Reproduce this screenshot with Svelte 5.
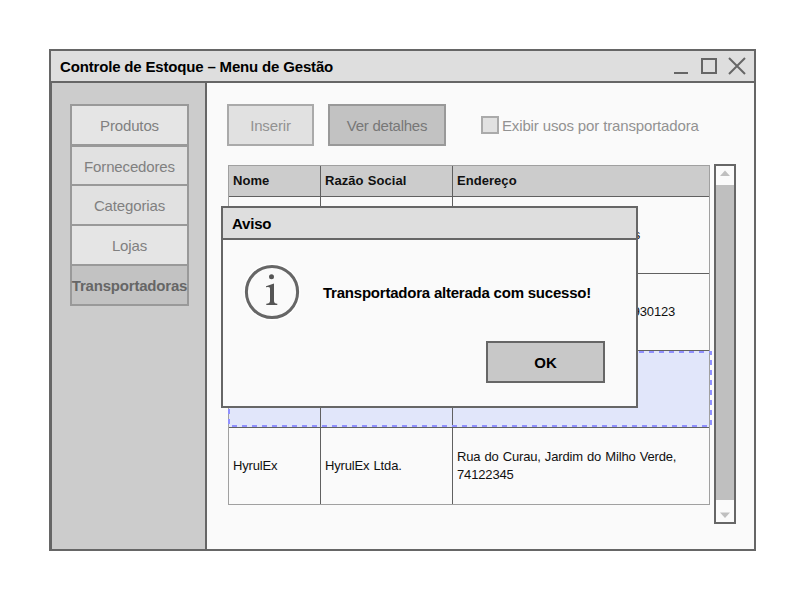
<script>
  const menu = ['Produtos', 'Fornecedores', 'Categorias', 'Lojas', 'Transportadoras'];
  const rows = [
    { name: '', company: '', lines: ['Avenida das Palmeras, Campos'] },
    { name: '', company: '', lines: ['Rua da Laranjeiras, Centro, 74930123'] },
    { name: '', company: '', lines: [], selected: true },
    { name: 'HyrulEx', company: 'HyrulEx Ltda.', lines: ['Rua do Curau, Jardim do Milho Verde,', '74122345'] }
  ];
</script>

<div class="stage">
  <div class="window">
    <header class="titlebar">
      <span class="title">Controle de Estoque – Menu de Gestão</span>
      <svg class="controls" width="74" height="20" viewBox="0 0 74 20" fill="none" stroke="#666" stroke-width="2">
        <path d="M1 17H15" />
        <rect x="29" y="3" width="14" height="14" />
        <path d="M56 2L72 18M72 2L56 18" />
      </svg>
    </header>
    <div class="body">
      <nav>
        {#each menu as item, i}
          <button class:active={i === 4} class="item"><span>{item}</span></button>
        {/each}
      </nav>
      <main>
        <div class="toolbar">
          <button class="insert">Inserir</button>
          <button class="details">Ver detalhes</button>
          <label><i class="box"></i><span>Exibir usos por transportadora</span></label>
        </div>
        <div class="content">
          <div class="table">
            <div class="row head"><b class="cell">Nome</b><b class="cell">Razão Social</b><b class="cell">Endereço</b></div>
            {#each rows as row}
              <div class="row" class:selected={row.selected}>
                <div class="cell">{row.name}</div>
                <div class="cell">{row.company}</div>
                <div class="cell address">{#each row.lines as line}<span>{line}</span>{/each}</div>
                {#if row.selected}
                  <svg class="outline" width="486" height="77" fill="none" stroke="#9090ff" stroke-width="2" stroke-dasharray="5 5">
                    <path d="M1 1H483M4 75H483M483 -1V75M1 -2V75" />
                  </svg>
                {/if}
              </div>
            {/each}
          </div>
          <div class="scroll">
            <svg width="18" height="19" viewBox="0 0 18 19"><path d="M4 10L9 4.5L14 10Z" fill="#bfbfbf" /></svg>
            <div class="thumb"></div>
            <svg width="18" height="22" viewBox="0 0 18 22"><path d="M4 12.5H14L9 18Z" fill="#bfbfbf" /></svg>
          </div>
        </div>
      </main>
    </div>
  </div>

  <section class="dialog">
    <header>Aviso</header>
    <div class="message">
      <svg width="58" height="58" viewBox="0 0 58 58">
        <circle cx="29" cy="29" r="28.5" fill="#fff" />
        <circle cx="29" cy="29" r="25.6" fill="#fafafa" stroke="#666" stroke-width="3" />
        <circle cx="28.5" cy="13.8" r="2.5" fill="#555" />
        <path d="M23 23.2L31 20.5V38Q31 40.5 34.3 40.7V42H23.3V40.7Q27 40.5 27 38V25.5Q27 23.5 23 24.2Z" fill="#555" />
      </svg>
      <span>Transportadora alterada com sucesso!</span>
    </div>
    <button class="ok">OK</button>
  </section>
</div>

<style>
  :global(body) { background: #fff; }
  * { box-sizing: border-box; }
  .stage { position: relative; width: 800px; height: 600px; padding: 49px; font: 15px/18px "Liberation Sans", Arial, sans-serif; letter-spacing: -.14px; color: #000; white-space: nowrap; overflow: hidden; }
  button { font: inherit; letter-spacing: inherit; padding: 2px 0 0; margin: 0; border-radius: 0; white-space: nowrap; display: flex; align-items: center; justify-content: center; }
  .window { width: 707px; height: 502px; border: 2px solid #666; background: #fafafa; display: flex; flex-direction: column; }
  .titlebar { height: 32px; flex: none; background: #dedede; border-bottom: 2px solid #666; display: flex; align-items: center; justify-content: space-between; padding: 0 7px 0 9px; font-weight: bold; letter-spacing: -.17px; }
  .title { padding-top: 2px; }
  .body { flex: 1; display: flex; }
  nav { width: 156px; background: #ccc; border-right: 2px solid #666; border-left: 1px solid #666; padding: 21px 0 0 18px; }
  .item { width: 119px; height: 42px; border: 2px solid #999; background: #e1e1e1; color: #808080; margin-top: -2px; font-size: 15px; }
  .item:first-child { margin-top: 0; background: #e5e5e5; }
  .item:nth-child(2) { height: 41px; margin-top: -1px; }
  .item:nth-child(4) { background: #e5e5e5; }
  .item.active { background: #c2c2c2; color: #666; font-weight: bold; letter-spacing: -.2px; }
  main { flex: 1; padding: 21px 0 0 20px; }
  .toolbar { display: flex; height: 42px; align-items: center; color: #929292; }
  .insert, .details { height: 42px; border: 2px solid #aaa; background: #e1e1e1; color: #929292; width: 87px; }
  .details { width: 118px; margin-left: 14px; background: #c2c2c2; border-color: #999; color: #777; letter-spacing: -.25px; }
  label { display: flex; align-items: center; margin-left: 35px; gap: 3px; }
  label span { padding-top: 2px; }
  .box { width: 18px; height: 18px; border: 2px solid #aaa; background: #e1e1e1; }
  .content { display: flex; padding: 18px 0 0 1px; align-items: flex-start; gap: 4px; }
  .table { width: 482px; margin-top: 1px; border: 1px solid #a0a0a0; font-size: 13px; }
  .row { position: relative; display: grid; grid-template-columns: 92px 132px 256px; height: 77px; border-bottom: 1px solid #606060; }
  .row:last-child { border: 0; height: 76px; }
  .head { height: 31px; background: #ccc; }
  .cell { display: flex; align-items: center; padding-left: 4px; border-right: 1px solid #606060; overflow: hidden; letter-spacing: -.15px; word-spacing: .6px; color: #111; }
  .head .cell { letter-spacing: .05px; }
  .cell:nth-child(3) { border: 0; }
  .address { flex-direction: column; align-items: flex-start; justify-content: center; }
  .selected { background: #e1e6fa; }
  .outline { position: absolute; left: -1px; top: 0; }
  .scroll { width: 22px; height: 360px; border: 2px solid #666; background: #fafafa; display: flex; flex-direction: column; }
  .thumb { flex: 1; background: #bfbfbf; }
  .dialog { position: absolute; left: 221px; top: 206px; width: 417px; height: 202px; border: 2px solid #666; background: #fafafa; font-weight: bold; letter-spacing: -.22px; }
  .dialog header { height: 32px; border-bottom: 2px solid #666; background: #dedede; display: flex; align-items: center; padding: 2px 0 0 9px; }
  .message { display: flex; align-items: center; gap: 22px; padding: 23px 0 0 20px; }
  .message span { padding-top: 2px; }
  .ok { width: 119px; height: 42px; margin: 20px 0 0 263px; border: 2px solid #666; background: #c8c8c8; color: #000; letter-spacing: 0; }
</style>
